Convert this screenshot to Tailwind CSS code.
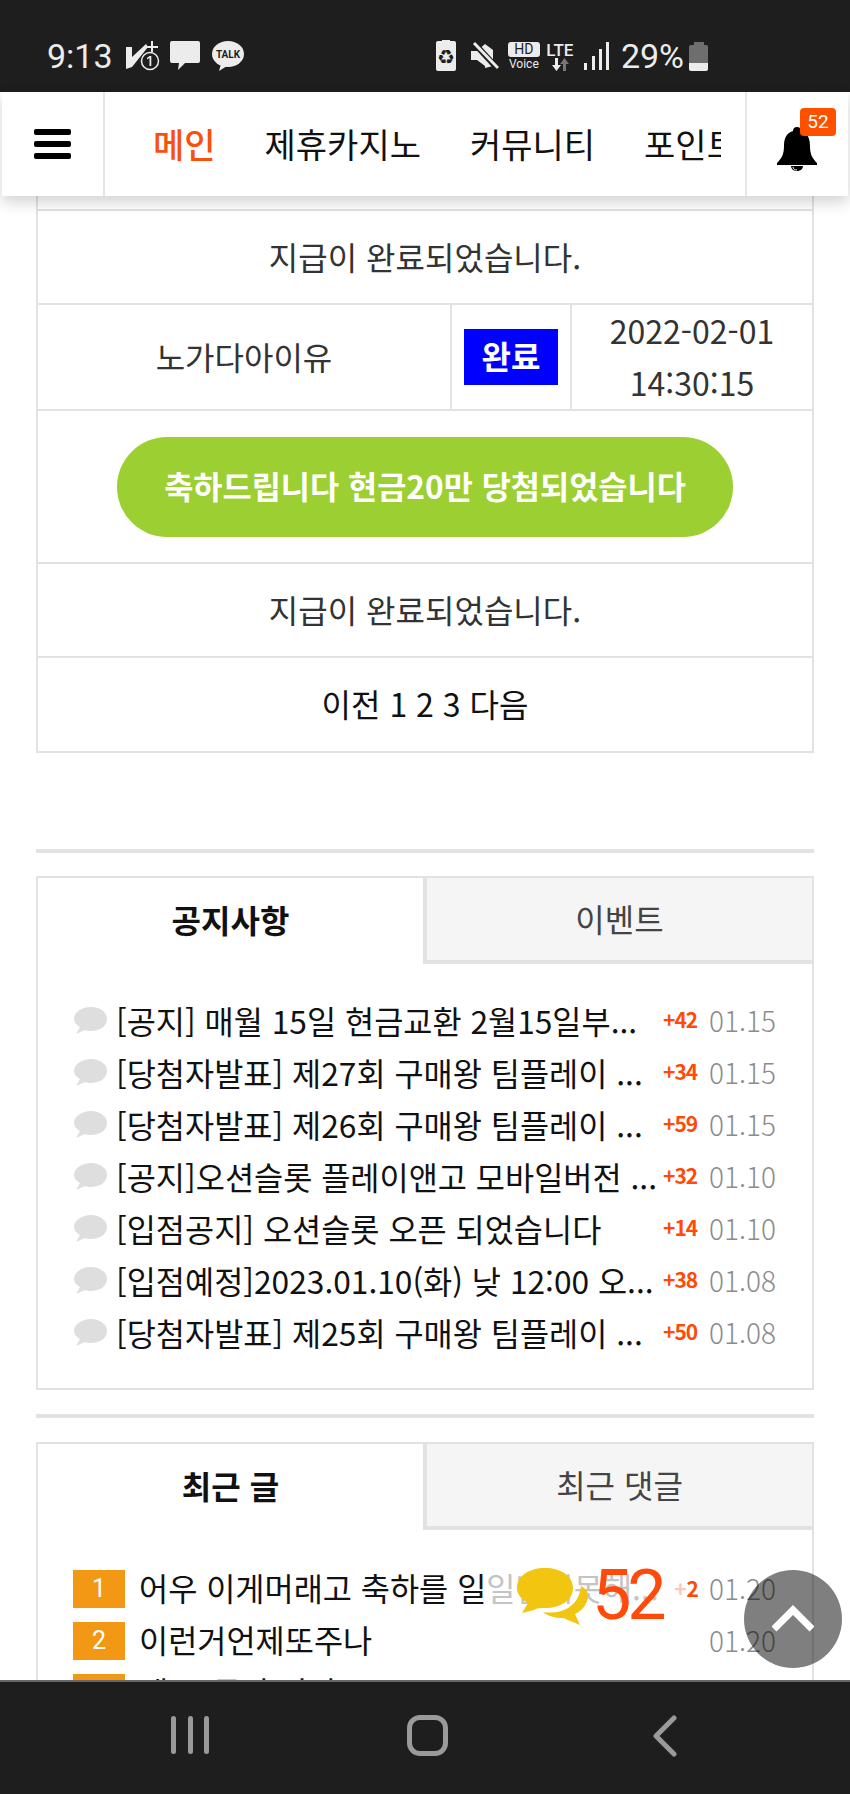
<!DOCTYPE html>
<html lang="ko">
<head>
    <meta charset="UTF-8">
    <meta name="viewport" content="width=device-width, initial-scale=1.0">
    <title>Main</title>
    <script src="https://cdn.jsdelivr.net/npm/@tailwindcss/browser@4"></script>
</head>
<body class="bg-white font-['Noto_Sans_CJK_KR','Noto_Sans',sans-serif] text-[#111]">
<div class="relative w-[850px] h-[1794px] overflow-hidden flex flex-col">

    <!-- Status bar -->
    <div class="h-[92px] shrink-0 bg-[#1e1e1e] flex items-start justify-between pt-[40px] pl-[47px] pr-[142px] text-[#ececec] font-['Roboto',sans-serif]">
        <div class="flex items-center h-[32px]">
            <span class="text-[34px] leading-[32px]">9:13</span>
            <svg class="w-[34px] h-[30px] ml-[13px]" viewBox="0 0 34 30" fill="#ececec">
                <path d="M0 6h6v10L20 3l2 3L6 26 0 28z"/>
                <path d="M25 0h2v5h5v2h-5v4h-2V7h-5V5h5z"/>
                <circle cx="24" cy="20" r="8.500" fill="#1e1e1e" stroke="#ececec" stroke-width="1.500"/>
                <path d="M23.500 15h1.800v10h-1.800zM21 17l2.500-2v2l-2.500 1.500z"/>
            </svg>
            <svg class="w-[30px] h-[30px] ml-[10px]" viewBox="0 0 30 30" fill="#ececec">
                <path d="M2 0h26a2 2 0 0 1 2 2v18a2 2 0 0 1-2 2H15l-7 7 1-7H2a2 2 0 0 1-2-2V2a2 2 0 0 1 2-2z"/>
            </svg>
            <svg class="w-[32px] h-[30px] ml-[12px]" viewBox="0 0 32 30">
                <ellipse cx="16" cy="13" rx="16" ry="13" fill="#ececec"/>
                <path d="M9 23l-2 7 8-5z" fill="#ececec"/>
                <text x="16" y="17" text-anchor="middle" font-size="10" font-weight="700" font-family="Roboto" fill="#1e1e1e">TALK</text>
            </svg>
        </div>
        <div class="flex items-center h-[32px]">
            <div class="relative w-[20px] h-[30px] rounded-[2px] bg-[#ececec] text-[#1e1e1e] text-[20px] leading-[33px] text-center font-['DejaVu_Sans',sans-serif]">
                <span class="absolute left-[6px] -top-[1px] w-[8px] h-[3px] bg-[#ececec]"></span>♻
            </div>
            <svg class="w-[28px] h-[28px] ml-[15px]" viewBox="0 0 28 28" fill="#ececec">
                <path d="M0 9h6l8-7v22l-8-6H0z"/>
                <path d="M14 2l8 6v16l-8 2z"/>
                <path d="M2 0l25 27" stroke="#1e1e1e" stroke-width="6"/>
                <path d="M3 1l24 25" stroke="#ececec" stroke-width="3"/>
            </svg>
            <div class="w-[32px] ml-[9px] flex flex-col items-center">
                <span class="w-[32px] h-[15px] rounded-[3px] bg-[#ececec] text-[#1e1e1e] text-[14px] leading-[15px] text-center">HD</span>
                <span class="text-[12px] leading-[13px] mt-[1px]">Voice</span>
            </div>
            <div class="w-[30px] ml-[5px] flex flex-col items-center">
                <span class="text-[17px] leading-[16px] font-medium">LTE</span>
                <svg class="w-[20px] h-[13px]" viewBox="0 0 20 13">
                    <path d="M5 0h3v7h3l-4.500 6L2 7h3z" fill="#ececec"/>
                    <path d="M13 13h3V6h3l-4.500-6L10 6h3z" fill="#777"/>
                </svg>
            </div>
            <svg class="w-[25px] h-[28px] ml-[9px]" viewBox="0 0 25 28" fill="#ececec">
                <rect x="0" y="21" width="3" height="7"/>
                <rect x="8" y="14" width="3" height="14"/>
                <rect x="15" y="7" width="3" height="21"/>
                <rect x="22" y="0" width="3" height="28"/>
            </svg>
            <span class="text-[34px] leading-[32px] ml-[12px]">29%</span>
            <div class="w-[19px] h-[29px] ml-[5px] flex flex-col items-center">
                <div class="w-[10px] h-[3px] bg-[#6e6e6e]"></div>
                <div class="w-[19px] h-[26px] rounded-[2px] bg-[linear-gradient(#6e6e6e_70%,#ececec_70%)]"></div>
            </div>
        </div>
    </div>

    <!-- Top nav -->
    <div class="relative z-10 h-[104px] shrink-0 ml-[2px] mr-[2px] bg-white flex shadow-[0_6px_14px_rgba(0,0,0,0.18)]">
        <div class="w-[103px] shrink-0 border-r-2 border-[#e6e6e6] flex flex-col items-center justify-center gap-[6px]">
            <span class="w-[37px] h-[6px] rounded-[2px] bg-black"></span>
            <span class="w-[37px] h-[6px] rounded-[2px] bg-black"></span>
            <span class="w-[37px] h-[6px] rounded-[2px] bg-black"></span>
        </div>
        <div class="w-[616px] overflow-hidden mr-[24px] flex items-center text-[34px] leading-[40px] whitespace-nowrap">
            <div class="flex pl-[48px] gap-[49px]">
                <span class="text-[#fb4f0e] font-medium">메인</span>
                <span>제휴카지노</span>
                <span>커뮤니티</span>
                <span>포인트샵</span>
            </div>
        </div>
        <div class="relative flex-1 border-l-2 border-[#e6e6e6] flex items-center justify-center">
            <svg class="w-[40px] h-[44px] mt-[10px] mr-[2px]" viewBox="0 0 40 44" fill="#000">
                <path d="M20 0c2.500 0 4 1.500 4 4 7 2 9 8 9 15 0 8 2 12 7 17v2H0v-2c5-5 7-9 7-17 0-7 2-13 9-15 0-2.500 1.500-4 4-4z"/>
                <path d="M14 39c0 3 3 5 6 5s6-2 6-5z"/>
                <path d="M16 40c0 2 2 3 4 3" stroke="#fff" fill="none" stroke-width="1"/>
            </svg>
            <span class="absolute left-[53px] top-[16px] w-[36px] h-[28px] rounded-[4px] bg-[#ff5000] text-white text-[19px] leading-[28px] text-center font-['Roboto',sans-serif]">52</span>
        </div>
    </div>

    <!-- Scrolled content -->
    <div class="flex-1 min-h-0 overflow-hidden px-[36px]">

        <!-- Prize table -->
        <div class="border-2 border-t-0 border-[#e2e2e2] text-[#333] text-[32px]">
            <div class="h-[15px] border-b-2 border-[#e2e2e2]"></div>
            <div class="h-[94px] pb-[3px] border-b-2 border-[#e2e2e2] flex items-center justify-center">지급이 완료되었습니다.</div>
            <div class="h-[106px] border-b-2 border-[#e2e2e2] flex">
                <div class="w-[412px] pb-[3px] flex items-center justify-center">노가다아이유</div>
                <div class="w-[122px] border-x-2 border-[#e2e2e2] flex items-center justify-center">
                    <span class="w-[94px] h-[56px] bg-[#0000ff] text-white font-bold text-center leading-[52px]">완료</span>
                </div>
                <div class="flex-1 pb-[3px] flex flex-col items-center justify-center leading-[52px]">
                    <span>2022-02-01</span>
                    <span>14:30:15</span>
                </div>
            </div>
            <div class="h-[153px] border-b-2 border-[#e2e2e2] flex items-center justify-center">
                <span class="w-[616px] h-[100px] rounded-[50px] bg-[#9ccf31] text-white text-[31.700px] font-bold leading-[96px] text-center whitespace-nowrap">축하드립니다 현금20만 당첨되었습니다</span>
            </div>
            <div class="h-[94px] pb-[2px] border-b-2 border-[#e2e2e2] flex items-center justify-center">지급이 완료되었습니다.</div>
            <div class="h-[93px] pb-[3px] flex items-center justify-center text-[#111]">이전 1 2 3 다음</div>
        </div>

        <div class="h-[4px] bg-[#e2e2e2] mt-[96px]"></div>

        <!-- Notices -->
        <div class="mt-[23px] h-[514px] border-2 border-[#e2e2e2]">
            <div class="flex h-[86px] text-[32px]">
                <div class="w-[385px] font-bold flex items-center justify-center pb-[4px]">공지사항</div>
                <div class="flex-1 flex items-center justify-center pb-[3px] text-[#444] bg-[#f5f5f5] border-l-4 border-b-4 border-[#e2e2e2]">이벤트</div>
            </div>
            <div id="noticeList" class="pt-[30px] pl-[36px] pr-[20px]"></div>
        </div>

        <div class="h-[4px] bg-[#e2e2e2] mt-[24px]"></div>

        <!-- Recent posts -->
        <div class="mt-[24px] border-2 border-b-0 border-[#e2e2e2] h-[300px]">
            <div class="flex h-[86px] text-[32px]">
                <div class="w-[385px] font-bold flex items-center justify-center pb-[4px]">최근 글</div>
                <div class="flex-1 flex items-center justify-center pb-[3px] text-[#444] bg-[#f5f5f5] border-l-4 border-b-4 border-[#e2e2e2]">최근 댓글</div>
            </div>
            <div id="recentList" class="pt-[33px] pl-[35px] pr-[20px]"></div>
        </div>
    </div>

    <!-- Floating chat counter -->
    <div class="absolute left-[517px] top-[1560px] z-20 flex items-center">
        <svg class="w-[72px] h-[58px] mt-[4px]" viewBox="0 0 72 58" fill="#f2c511">
            <path d="M71 27c0 9-6 16-13 19l5 11-17-7c-8 0-15-2-20-6 18 3 36-5 38-26 4 2 7 5 7 9z"/>
            <path d="M28 0c16 0 28 8 28 20S44 40 28 40c-4 0-8 0-11 2L5 45l6-10C4 31 0 26 0 20 0 8 12 0 28 0z"/>
        </svg>
        <span class="text-[#ff4a0a] text-[70px] leading-[70px] font-['Roboto',sans-serif] ml-[3px] tracking-[-4px]">52</span>
    </div>

    <!-- Scroll to top -->
    <div class="absolute left-[744px] top-[1570px] z-20 w-[98px] h-[98px] rounded-full bg-black/50 flex items-center justify-center">
        <svg class="w-[42px] h-[28px] mb-[2px]" viewBox="0 0 42 28" fill="none" stroke="#fff" stroke-width="7">
            <path d="M2 25L21 6l19 19"/>
        </svg>
    </div>

    <!-- Android nav bar -->
    <div class="absolute inset-x-0 bottom-0 z-30 h-[114px] bg-[#1e1e1e] border-t-2 border-[#666]">
        <div class="w-[38px] h-[38px] absolute left-[171px] top-[34px] flex justify-between">
            <span class="w-[5px] h-full rounded-full bg-[#9a9a9a]"></span>
            <span class="w-[5px] h-full rounded-full bg-[#9a9a9a]"></span>
            <span class="w-[5px] h-full rounded-full bg-[#9a9a9a]"></span>
        </div>
        <div class="absolute left-[407px] top-[33px] w-[41px] h-[41px] rounded-[13px] border-[5px] border-[#9a9a9a]"></div>
        <svg class="absolute left-[652px] top-[33px] w-[26px] h-[42px]" viewBox="0 0 26 42" fill="none" stroke="#9a9a9a" stroke-width="5" stroke-linecap="round" stroke-linejoin="round">
            <path d="M22 3L4 21l18 18"/>
        </svg>
    </div>
</div>

<script>
    // Notice rows
    const notices = [
        ['[공지] 매월 15일 현금교환 2월15일부...', '+42', '01.15'],
        ['[당첨자발표] 제27회 구매왕 팀플레이 ...', '+34', '01.15'],
        ['[당첨자발표] 제26회 구매왕 팀플레이 ...', '+59', '01.15'],
        ['[공지]오션슬롯 플레이앤고 모바일버전 ...', '+32', '01.10'],
        ['[입점공지] 오션슬롯 오픈 되었습니다', '+14', '01.10'],
        ['[입점예정]2023.01.10(화) 낮 12:00 오...', '+38', '01.08'],
        ['[당첨자발표] 제25회 구매왕 팀플레이 ...', '+50', '01.08']
    ];

    // Recent posts
    const recent = [
        ['1', '어우 이게머래고 축하를 일<span class="text-[#c4c4c4]">일받지못해...</span>', '<span class="text-[#f9c8b8]">+</span>2', '01.20'],
        ['2', '이런거언제또주나', '', '01.20'],
        ['3', '네 50돌만 달라?', '', '01.20']
    ];

    document.getElementById('noticeList').innerHTML = notices.map(n => `
        <div class="h-[52px] flex items-center">
            <svg class="w-[33px] h-[29px] shrink-0 mr-[9px]" viewBox="0 0 33 29" fill="#dedede">
                <path d="M17 1c9 0 16 5 16 12s-7 12-16 12c-2 0-4 0-6-1l-9 4 4-7c-4-2-6-5-6-8C0 6 8 1 17 1z"/>
            </svg>
            <span class="w-[547px] shrink-0 text-[31.700px] leading-[46px] whitespace-nowrap">${n[0]}</span>
            <span class="w-[36px] shrink-0 text-[#ff4a0a] text-[21px] font-bold tracking-[-1px]">${n[1]}</span>
            <span class="ml-[10px] text-[#8c8c8c] text-[28px] font-light">${n[2]}</span>
        </div>
    `).join('');

    document.getElementById('recentList').innerHTML = recent.map(r => `
        <div class="h-[52px] flex items-center">
            <span class="w-[52px] h-[38px] shrink-0 mr-[14px] bg-[#f39814] text-white text-[25px] leading-[38px] text-center font-['Roboto',sans-serif]">${r[0]}</span>
            <span class="w-[524px] shrink-0 pb-[4px] text-[31.700px] leading-[46px] whitespace-nowrap">${r[1]}</span>
            <span class="w-[36px] shrink-0 text-right text-[#ff4a0a] text-[21px] font-bold">${r[2]}</span>
            <span class="ml-[10px] pb-[3px] text-[#8c8c8c] text-[28px] font-light">${r[3]}</span>
        </div>
    `).join('');
</script>
</body>
</html>
